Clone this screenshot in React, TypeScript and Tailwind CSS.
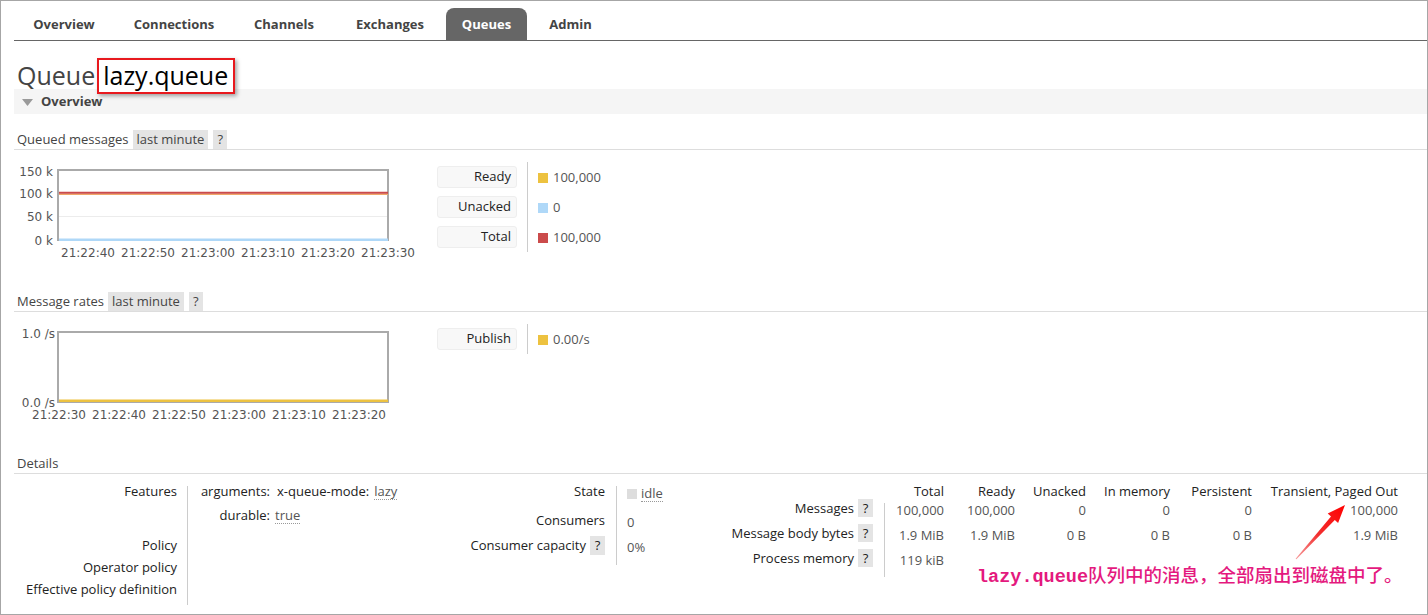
import React from 'react';

const tabs = [
  { label: 'Overview', cls: 'w-[100px] text-[#444]' },
  { label: 'Connections', cls: 'w-[120px] text-[#444]' },
  { label: 'Channels', cls: 'w-[100px] text-[#444]' },
  { label: 'Exchanges', cls: 'w-[112px] text-[#444]' },
  { label: 'Queues', cls: 'w-[81px] bg-[#666] text-white rounded-t-[8px]' },
  { label: 'Admin', cls: 'w-[87px] text-[#444]' },
];

const tickFont = "[font-family:'DejaVu_Sans',sans-serif] text-[12px] fill-[#545454]";

function SectionHead({ title, withRange }: { title: string; withRange?: boolean }) {
  return (
    <div className="ml-[13px] h-[20px] border-b border-[#dddddd] flex items-stretch">
      <span className="pl-[3px] leading-[19px]">{title}</span>
      {withRange && (
        <>
          <span className="ml-[4px] px-[4px] bg-[#e4e4e4] leading-[19px]">last minute</span>
          <span className="ml-[5px] px-[4px] bg-[#e4e4e4] leading-[19px]">?</span>
        </>
      )}
    </div>
  );
}

function Legend({ rows }: { rows: { label: string; color: string; value: string }[] }) {
  return (
    <div className="pt-[12px] flex">
      <div className="w-[80px]">
        {rows.map((r) => (
          <div key={r.label} className="h-[30px] pt-[4px]">
            <div className="h-[22px] bg-[#f8f8f8] border border-[#eeeeee] rounded-[3px] text-right pr-[5px] leading-[19px] text-[#222]">
              {r.label}
            </div>
          </div>
        ))}
      </div>
      <div className="ml-[10px] w-px bg-[#cccccc]" style={{ height: rows.length * 30 }} />
      <div className="pl-[10px]">
        {rows.map((r) => (
          <div key={r.label} className="h-[30px] flex items-center pt-[1px] text-[#555]">
            <span className="w-[10px] h-[10px]" style={{ background: r.color }} />
            <span className="ml-[5px]">{r.value}</span>
          </div>
        ))}
      </div>
    </div>
  );
}

function QueuedChart() {
  const xs = ['21:22:40', '21:22:50', '21:23:00', '21:23:10', '21:23:20', '21:23:30'];
  return (
    <svg width="423" height="120" className={`block ${tickFont}`}>
      <rect x="44" y="20" width="330" height="70" fill="#fff" stroke="#aaaaaa" strokeWidth="2" />
      <line x1="45" x2="373" y1="66.5" y2="66.5" stroke="#ececec" strokeWidth="1" />
      <line x1="45" x2="374" y1="44.3" y2="44.3" stroke="#f0a868" strokeWidth="1.6" />
      <line x1="45" x2="374" y1="42.8" y2="42.8" stroke="#cb4b4b" strokeWidth="2" />
      <line x1="45" x2="374" y1="89.8" y2="89.8" stroke="#afd8f8" strokeWidth="2.4" />
      <text x="39" y="26" textAnchor="end">150 k</text>
      <text x="39" y="47.5" textAnchor="end">100 k</text>
      <text x="39" y="71" textAnchor="end">50 k</text>
      <text x="39" y="94.5" textAnchor="end">0 k</text>
      {xs.map((t, i) => (
        <text key={t} x={74 + i * 60} y="106.5" textAnchor="middle">{t}</text>
      ))}
    </svg>
  );
}

function RatesChart() {
  const xs = ['21:22:30', '21:22:40', '21:22:50', '21:23:00', '21:23:10', '21:23:20'];
  return (
    <svg width="423" height="120" className={`block ${tickFont}`}>
      <rect x="44" y="20" width="330" height="70" fill="#fff" stroke="#aaaaaa" strokeWidth="2" />
      <line x1="45" x2="374" y1="88.8" y2="88.8" stroke="#edc240" strokeWidth="2.4" />
      <text x="41" y="26" textAnchor="end">1.0 /s</text>
      <text x="41" y="94.5" textAnchor="end">0.0 /s</text>
      {xs.map((t, i) => (
        <text key={t} x={45 + i * 60} y="106.5" textAnchor="middle">{t}</text>
      ))}
    </svg>
  );
}

function Help() {
  return <span className="w-[15px] h-[18px] bg-[#e4e4e4] leading-[18px] text-center">?</span>;
}

const cols = [
  { h: 'Total', w: 'w-[65px]' },
  { h: 'Ready', w: 'w-[71px]' },
  { h: 'Unacked', w: 'w-[71px]' },
  { h: 'In memory', w: 'w-[84px]' },
  { h: 'Persistent', w: 'w-[82px]' },
  { h: 'Transient, Paged Out', w: 'w-[146px]' },
];

const statRows = [
  { label: 'Messages', vals: ['100,000', '100,000', '0', '0', '0', '100,000'] },
  { label: 'Message body bytes', vals: ['1.9 MiB', '1.9 MiB', '0 B', '0 B', '0 B', '1.9 MiB'] },
  { label: 'Process memory', vals: ['119 kiB', '', '', '', '', ''] },
];

export default function App() {
  return (
    <div className="w-[1428px] h-[615px] border border-[#a6a6a6] bg-white relative overflow-hidden [font-family:'Open_Sans',sans-serif] text-[13px] text-[#444]">
      {/* tabs */}
      <div className="ml-[13px] h-[40px] border-b border-[#666] flex items-end">
        {tabs.map((t) => (
          <div key={t.label} className={`${t.cls} h-[32px] pt-[2px] flex items-center justify-center font-bold text-[13px]`}>
            {t.label}
          </div>
        ))}
      </div>

      {/* title */}
      <div className="h-[48px] ml-[16px] flex items-start">
        <span className="text-[25px] leading-[30px] mt-[19px] text-[#444]">Queue</span>
        <span className="relative z-10 mt-[17px] ml-[2px] h-[36px] border-2 border-[#e8191e] bg-white pl-[4px] pr-[5px] text-[25px] leading-[31px] text-black shadow-[2px_2px_4px_rgba(0,0,0,0.35)]">
          lazy.queue
        </span>
      </div>

      {/* overview bar */}
      <div className="ml-[13px] h-[25px] bg-[#f5f5f5] flex items-center">
        <svg width="11" height="7" className="ml-[8px] mt-[1px]">
          <polygon points="0,0 11,0 5.5,7" fill="#9a9a9a" />
        </svg>
        <span className="ml-[8px] font-bold">Overview</span>
      </div>

      <div className="h-[16px]" />
      <SectionHead title="Queued messages" withRange />
      <div className="ml-[13px] h-[142px] flex">
        <QueuedChart />
        <Legend
          rows={[
            { label: 'Ready', color: '#edc240', value: '100,000' },
            { label: 'Unacked', color: '#afd8f8', value: '0' },
            { label: 'Total', color: '#cb4b4b', value: '100,000' },
          ]}
        />
      </div>

      <SectionHead title="Message rates" withRange />
      <div className="ml-[13px] h-[142px] flex">
        <RatesChart />
        <Legend rows={[{ label: 'Publish', color: '#edc240', value: '0.00/s' }]} />
      </div>

      <SectionHead title="Details" />

      {/* details */}
      <div className="ml-[13px] mt-[9px] flex">
        {/* features */}
        <div className="w-[406px] flex">
          <div className="w-[173px] pr-[10px] text-right text-[#222] leading-[16px]">
            <div className="h-[54px]">Features</div>
            <div className="h-[22px]">Policy</div>
            <div className="h-[22px]">Operator policy</div>
            <div className="h-[22px]">Effective policy definition</div>
          </div>
          <div className="mt-[3px] h-[119px] w-px bg-[#cccccc]" />
          <div className="pl-[12px] leading-[16px] text-[#222]">
            <div className="h-[24px] flex">
              <span className="w-[70px] text-right">arguments:</span>
              <span className="ml-[7px]">x-queue-mode:</span>
              <span className="ml-[5px] h-[17px] text-[#555] border-b border-dotted border-[#999]">lazy</span>
            </div>
            <div className="h-[24px] flex">
              <span className="w-[70px] text-right">durable:</span>
              <span className="ml-[5px] h-[17px] text-[#555] border-b border-dotted border-[#999]">true</span>
            </div>
          </div>
        </div>

        {/* state */}
        <div className="w-[300px] flex">
          <div className="w-[196px] pr-[11px] text-[#222] leading-[16px]">
            <div className="h-[29px] text-right">State</div>
            <div className="h-[25px] text-right">Consumers</div>
            <div className="h-[25px] flex justify-end items-start gap-[4px]">
              <span>Consumer capacity</span>
              <span className="-mt-[1px] w-[15px] h-[19px] bg-[#e4e4e4] leading-[19px] text-center">?</span>
            </div>
          </div>
          <div className="mt-[3px] h-[79px] w-px bg-[#cccccc]" />
          <div className="pl-[10px] pt-[2px] leading-[16px] text-[#555]">
            <div className="h-[29px] flex items-start">
              <span className="mt-[4px] w-[10px] h-[10px] bg-[#dddddd]" />
              <span className="ml-[4px] h-[17px] border-b border-dotted border-[#999]">idle</span>
            </div>
            <div className="h-[25px]">0</div>
            <div className="h-[25px]">0%</div>
          </div>
        </div>

        {/* message stats */}
        <div className="flex flex-col">
          <div className="h-[16px] pl-[165px] flex leading-[16px] text-[#222]">
            {cols.map((c) => (
              <div key={c.h} className={`${c.w} pr-[6px] text-right whitespace-nowrap`}>{c.h}</div>
            ))}
          </div>
          <div className="flex">
            <div className="w-[164px] pr-[11px] text-[#222]">
              {statRows.map((r) => (
                <div key={r.label} className="h-[25px] flex justify-end items-start gap-[4px]">
                  <span className="leading-[19px] whitespace-nowrap">{r.label}</span>
                  <Help />
                </div>
              ))}
            </div>
            <div className="mt-[4px] h-[74px] w-px bg-[#cccccc]" />
            <div className="text-[#555]">
              {statRows.map((r) => (
                <div key={r.label} className="h-[25px] flex leading-[23px]">
                  {r.vals.map((v, i) => (
                    <div key={i} className={`${cols[i].w} pr-[6px] text-right`}>{v}</div>
                  ))}
                </div>
              ))}
            </div>
          </div>
        </div>
      </div>

      {/* annotation */}
      <div className="absolute left-[976px] top-[561px] leading-[24px] text-[18.5px] font-medium text-[#e4197e] whitespace-nowrap [font-family:'Noto_Sans_CJK_SC',sans-serif]">
        <span className="[font-family:'Liberation_Mono',monospace] font-bold">lazy.queue</span>队列中的消息，全部扇出到磁盘中了。
      </div>
      <svg className="absolute left-[1287px] top-[497px]" width="64" height="68">
        <defs>
          <linearGradient id="arrowGrad" x1="0" y1="1" x2="1" y2="0">
            <stop offset="0" stopColor="#f7a0a0" />
            <stop offset="0.45" stopColor="#f23030" />
            <stop offset="1" stopColor="#ff0000" />
          </linearGradient>
        </defs>
        <polygon
          points="57,7 50.1,25 46.8,22 8.4,61.3 7.6,60.7 43,18.6 39.7,15.6"
          fill="url(#arrowGrad)"
        />
      </svg>
    </div>
  );
}
